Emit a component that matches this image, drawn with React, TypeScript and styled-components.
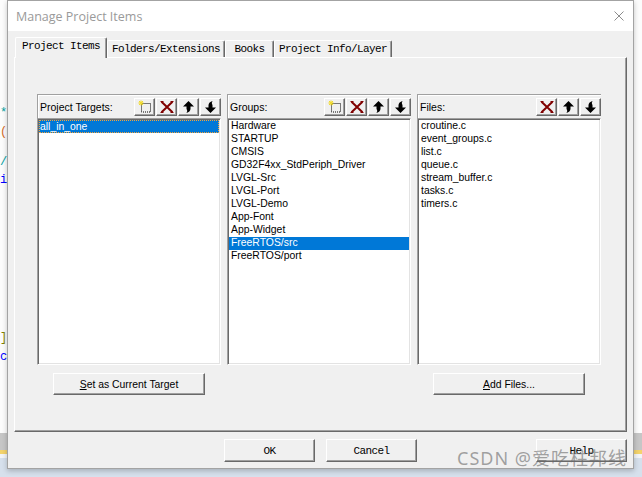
import React from 'react'
import styled, { createGlobalStyle } from 'styled-components'

const uiFont = `'Liberation Sans', Arial, sans-serif`
const monoFont = `'Liberation Mono', 'Courier New', monospace`

const GlobalStyle = createGlobalStyle`
  html, body {
    margin: 0;
    padding: 0;
  }
  body {
    width: 642px;
    height: 477px;
    overflow: hidden;
    font-family: ${uiFont};
  }
`

const Desktop = styled.div`
  display: flex;
  width: 642px;
  height: 477px;
  overflow: hidden;
  background: linear-gradient(
    to bottom,
    #fcfcfc 0,
    #fcfcfc 433px,
    #c6c6c6 433px,
    #c6c6c6 450px,
    #f3d36c 450px,
    #f3d36c 454px,
    #f2f4f7 454px,
    #f2f4f7 458px,
    #d6e0ec 458px
  );
`

const Gutter = styled.div`
  width: 7px;
  flex: none;
  display: flex;
  flex-direction: column;
  overflow: hidden;
  font: 12px ${monoFont};
`

const EditorChar = styled.span<{ $gap: number; $color: string }>`
  margin-top: ${p => p.$gap}px;
  height: 14px;
  line-height: 14px;
  color: ${p => p.$color};
`

const Window = styled.div`
  flex: none;
  width: 627px;
  height: 469px;
  box-sizing: border-box;
  border: 1px solid #a3a3a3;
  background: #f0f0f0;
  box-shadow: 0 2px 5px rgba(0, 0, 0, 0.22);
  display: flex;
  flex-direction: column;
`

const TitleBar = styled.div`
  height: 30px;
  flex: none;
  background: #fff;
  display: flex;
  align-items: center;
  justify-content: space-between;
  padding: 0 9px 0 8px;
`

const Title = styled.span`
  font: 12.5px 'Open Sans', ${uiFont};
  color: #9a9a9a;
`

const Body = styled.div`
  flex: 1;
  display: flex;
  flex-direction: column;
  padding: 6px 6px 0 6px;
`

const TabRow = styled.div`
  display: flex;
  align-items: flex-end;
  height: 20px;
  padding-left: 1px;
`

const Tab = styled.div<{ $w: number; $active?: boolean }>`
  position: relative;
  z-index: ${p => (p.$active ? 1 : 0)};
  width: ${p => p.$w}px;
  height: ${p => (p.$active ? 21 : 17)}px;
  margin-bottom: ${p => (p.$active ? -1 : 0)}px;
  box-sizing: border-box;
  border-top: 1px solid #fff;
  border-left: 1px solid #fff;
  border-right: 1px solid #696969;
  border-radius: 2px 2px 0 0;
  box-shadow: inset -1px 0 #a0a0a0;
  background: #f0f0f0;
  display: flex;
  align-items: ${p => (p.$active ? 'flex-start' : 'center')};
  padding-top: ${p => (p.$active ? 2 : 0)}px;
  justify-content: center;
  font: 11px ${monoFont};
  letter-spacing: -0.6px;
  color: #000;
  white-space: nowrap;
`

const Panel = styled.div`
  width: 613px;
  height: 375px;
  box-sizing: border-box;
  border-top: 1px solid #fff;
  border-left: 1px solid #fff;
  border-right: 1px solid #696969;
  border-bottom: 1px solid #696969;
  box-shadow: inset -1px -1px #a0a0a0;
  padding: 36px 0 0 22px;
`

const Grid = styled.div`
  display: grid;
  grid-template-columns: repeat(3, 184px);
  grid-template-rows: 271px 22px;
  column-gap: 6px;
  row-gap: 8px;
`

const GroupBox = styled.div`
  display: flex;
  flex-direction: column;
  min-height: 0;
`

const Header = styled.div`
  height: 24px;
  flex: none;
  box-sizing: border-box;
  border-top: 1px solid #a0a0a0;
  border-left: 1px solid #a0a0a0;
  box-shadow: inset 1px 1px #fff;
  display: flex;
  align-items: center;
  padding-left: 2px;
`

const Label = styled.span`
  flex: 1;
  font: 10.5px ${uiFont};
  color: #000;
`

const Tools = styled.div`
  display: flex;
  gap: 1px;
`

const ToolButton = styled.button`
  width: 21px;
  height: 18px;
  box-sizing: border-box;
  padding: 0;
  border: 1px solid;
  border-color: #fff #696969 #696969 #fff;
  box-shadow: inset -1px -1px #a0a0a0;
  background: #f0f0f0;
  display: flex;
  align-items: center;
  justify-content: center;
`

const ListBox = styled.div`
  flex: 1;
  background: #fff;
  border-top: 1px solid #a0a0a0;
  border-left: 1px solid #a0a0a0;
  border-right: 1px solid #fff;
  border-bottom: 1px solid #fff;
  box-shadow: inset 1px 1px #696969, inset -1px -1px #e3e3e3;
  padding: 1px;
  overflow: hidden;
`

const Item = styled.div<{ $selected?: boolean; $focus?: boolean }>`
  height: 13px;
  box-sizing: border-box;
  line-height: ${p => (p.$focus ? 12 : 14)}px;
  padding-left: ${p => (p.$focus ? 0 : 2)}px;
  border: ${p => (p.$focus ? '1px dotted #f2a33a' : 'none')};
  font: 10.4px ${uiFont};
  white-space: nowrap;
  color: ${p => (p.$selected ? '#fff' : '#000')};
  background: ${p => (p.$selected ? '#0078d7' : 'transparent')};
`

const PushButton = styled.button<{ $w: number; $mono?: boolean }>`
  width: ${p => p.$w}px;
  height: 23px;
  box-sizing: border-box;
  padding: 0;
  border: 1px solid;
  border-color: #fff #696969 #696969 #fff;
  box-shadow: inset -1px -1px #a0a0a0;
  background: #f0f0f0;
  color: #000;
  font: ${p => (p.$mono ? `11px ${monoFont}` : `10.4px ${uiFont}`)};
  letter-spacing: ${p => (p.$mono ? '-0.6px' : '0')};
`

const GridButton = styled(PushButton)`
  height: 22px;
  justify-self: start;
  margin-left: 16px;
`

const Footer = styled.div`
  position: relative;
  width: 613px;
  height: 36px;
  box-sizing: border-box;
  display: flex;
  gap: 11px;
  padding: 7px 0 0 210px;
`

const HelpButton = styled(PushButton)`
  margin-left: auto;
`

const Watermark = styled.span`
  position: absolute;
  right: 0;
  top: 12px;
  font: 18px 'Noto Sans', 'Noto Sans CJK SC', sans-serif;
  letter-spacing: 1px;
  color: rgba(105, 105, 105, 0.6);
  white-space: nowrap;
  pointer-events: none;
`

const NewIcon = () => (
  <svg width="14" height="13" viewBox="0 0 14 13">
    <rect x="3.5" y="3.5" width="9" height="8.5" fill="none" stroke="#000" strokeDasharray="1 1" />
    <path d="M3 0.5v5M0.5 3h5M1.2 1.2l3.6 3.6M4.8 1.2l-3.6 3.6" stroke="#f2d600" strokeWidth="1" />
    <rect x="2.5" y="2.5" width="1" height="1" fill="#fff8b0" />
  </svg>
)

const DeleteIcon = () => (
  <svg width="14" height="12" viewBox="0 0 14 12">
    <path d="M1.5 0.8l11 10.4M12.5 0.8l-11 10.4" stroke="#800000" strokeWidth="2" />
    <path d="M0.5 0.5h3M10.5 0.5h3M0.5 11.5h3M10.5 11.5h3" stroke="#800000" strokeWidth="1" />
  </svg>
)

const ArrowIcon = ({ down }: { down?: boolean }) => (
  <svg width="11" height="12" viewBox="0 0 11 12" style={down ? { transform: 'rotate(180deg)' } : undefined}>
    <path d="M5.5 0 L11 5.5 L7.5 5.5 L7.5 8 Q7.2 10.8 3.5 12 Q5 10 3.5 7.8 L3.5 5.5 L0 5.5 Z" fill="#000" />
  </svg>
)

const CloseIcon = () => (
  <svg width="10" height="10" viewBox="0 0 10 10">
    <path d="M0.5 0.5l9 9M9.5 0.5l-9 9" stroke="#8c8c8c" strokeWidth="1" />
  </svg>
)

const groups = [
  'Hardware',
  'STARTUP',
  'CMSIS',
  'GD32F4xx_StdPeriph_Driver',
  'LVGL-Src',
  'LVGL-Port',
  'LVGL-Demo',
  'App-Font',
  'App-Widget',
  'FreeRTOS/src',
  'FreeRTOS/port',
]

const files = ['croutine.c', 'event_groups.c', 'list.c', 'queue.c', 'stream_buffer.c', 'tasks.c', 'timers.c']

const editorChars = [
  { gap: 106, color: '#00a0a0', ch: '*' },
  { gap: 5, color: '#d2691e', ch: '(' },
  { gap: 16, color: '#00a0a0', ch: '/' },
  { gap: 4, color: '#0000ff', ch: 'i' },
  { gap: 144, color: '#808000', ch: ']' },
  { gap: 5, color: '#0000ff', ch: 'c' },
]

export default function App() {
  return (
    <>
      <GlobalStyle />
      <Desktop>
        <Gutter>
          {editorChars.map((c, i) => (
            <EditorChar key={i} $gap={c.gap} $color={c.color}>
              {c.ch}
            </EditorChar>
          ))}
        </Gutter>
        <Window>
          <TitleBar>
            <Title>Manage Project Items</Title>
            <CloseIcon />
          </TitleBar>
          <Body>
            <TabRow>
              <Tab $w={92} $active>Project Items</Tab>
              <Tab $w={118}>Folders/Extensions</Tab>
              <Tab $w={49}>Books</Tab>
              <Tab $w={118}>Project Info/Layer</Tab>
            </TabRow>
            <Panel>
              <Grid>
                <GroupBox>
                  <Header>
                    <Label>Project Targets:</Label>
                    <Tools>
                      <ToolButton><NewIcon /></ToolButton>
                      <ToolButton><DeleteIcon /></ToolButton>
                      <ToolButton><ArrowIcon /></ToolButton>
                      <ToolButton><ArrowIcon down /></ToolButton>
                    </Tools>
                  </Header>
                  <ListBox>
                    <Item $selected $focus>all_in_one</Item>
                  </ListBox>
                </GroupBox>
                <GroupBox>
                  <Header>
                    <Label>Groups:</Label>
                    <Tools>
                      <ToolButton><NewIcon /></ToolButton>
                      <ToolButton><DeleteIcon /></ToolButton>
                      <ToolButton><ArrowIcon /></ToolButton>
                      <ToolButton><ArrowIcon down /></ToolButton>
                    </Tools>
                  </Header>
                  <ListBox>
                    {groups.map(g => (
                      <Item key={g} $selected={g === 'FreeRTOS/src'}>{g}</Item>
                    ))}
                  </ListBox>
                </GroupBox>
                <GroupBox>
                  <Header>
                    <Label>Files:</Label>
                    <Tools>
                      <ToolButton><DeleteIcon /></ToolButton>
                      <ToolButton><ArrowIcon /></ToolButton>
                      <ToolButton><ArrowIcon down /></ToolButton>
                    </Tools>
                  </Header>
                  <ListBox>
                    {files.map(f => (
                      <Item key={f}>{f}</Item>
                    ))}
                  </ListBox>
                </GroupBox>
                <GridButton $w={152}>
                  <u>S</u>et as Current Target
                </GridButton>
                <div />
                <GridButton $w={152}>
                  <u>A</u>dd Files...
                </GridButton>
              </Grid>
            </Panel>
            <Footer>
              <PushButton $w={91} $mono>OK</PushButton>
              <PushButton $w={91} $mono>Cancel</PushButton>
              <HelpButton $w={91} $mono>Help</HelpButton>
              <Watermark>CSDN @爱吃柱邦线</Watermark>
            </Footer>
          </Body>
        </Window>
      </Desktop>
    </>
  )
}
